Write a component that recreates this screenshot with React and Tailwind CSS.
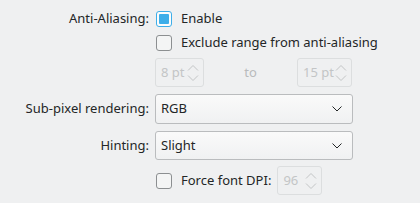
import React from "react";

const font = { fontFamily: '"Noto Sans", "Open Sans", sans-serif' };

function Checkbox({ checked }) {
  return (
    <span
      className={
        "flex h-4 w-4 shrink-0 items-center justify-center rounded-[3px] border " +
        (checked ? "border-[#3daee9] bg-[#fcfcfc]" : "border-[#8c8f91] bg-[#f4f5f5]")
      }
    >
      {checked && <span className="h-[10px] w-[10px] rounded-[1px] bg-[#3daee9]" />}
    </span>
  );
}

function SpinBox({ value, width }) {
  return (
    <div
      className="flex h-[29px] items-center justify-between rounded-[3px] border border-[#dcdedf] bg-[#eff0f1] pl-[5px] pr-[3px] text-[#c3c5c6]"
      style={{ width }}
    >
      <span>{value}</span>
      <svg width="14" height="24" viewBox="0 0 14 24" fill="none" stroke="#c3c5c6" strokeWidth="1">
        <path d="M2 9.5 L7 4.5 L12 9.5" />
        <path d="M2 14.5 L7 19.5 L12 14.5" />
      </svg>
    </div>
  );
}

function Combo({ value, h }) {
  return (
    <div
      className={
        "flex w-[198px] items-center justify-between rounded-[3px] border border-[#babcbe] bg-gradient-to-b from-[#fafafa] to-[#f0f1f2] pl-[5px] pr-[10px] text-[#232627] " +
        h
      }
    >
      <span>{value}</span>
      <svg width="10" height="6" viewBox="0 0 10 6" fill="none" stroke="#232627" strokeWidth="1">
        <path d="M0.5 0.5 L5 5 L9.5 0.5" />
      </svg>
    </div>
  );
}

export default function App() {
  return (
    <div className="h-[203px] w-[420px] bg-[#eff0f1] pt-[7px] text-[13px] text-[#232627]" style={font}>
      <div className="grid grid-cols-[149px_1fr] gap-x-[6px]">
        <div className="flex h-[24px] items-center justify-end">Anti-Aliasing:</div>
        <div className="flex h-[24px] items-center gap-[9px] pl-px">
          <Checkbox checked />
          <span>Enable</span>
        </div>

        <div />
        <div className="flex h-[24px] items-center gap-[9px] pl-px">
          <Checkbox />
          <span>Exclude range from anti-aliasing</span>
        </div>

        <div />
        <div className="mt-[3px] flex h-[29px] items-center">
          <SpinBox value="8 pt" width={49} />
          <span className="w-[93px] text-center text-[#b9bbbc]">to</span>
          <SpinBox value="15 pt" width={55} />
        </div>

        <div className="mt-[7px] flex h-[30px] items-center justify-end">Sub-pixel rendering:</div>
        <div className="mt-[7px]">
          <Combo value="RGB" h="h-[30px]" />
        </div>

        <div className="mt-[7px] flex h-[29px] items-center justify-end">Hinting:</div>
        <div className="mt-[7px]">
          <Combo value="Slight" h="h-[29px]" />
        </div>

        <div />
        <div className="mt-[6px] flex h-[29px] items-center pl-px">
          <Checkbox />
          <span className="ml-[9px]">Force font DPI:</span>
          <span className="ml-[6px]">
            <SpinBox value="96" width={45} />
          </span>
        </div>
      </div>
    </div>
  );
}
